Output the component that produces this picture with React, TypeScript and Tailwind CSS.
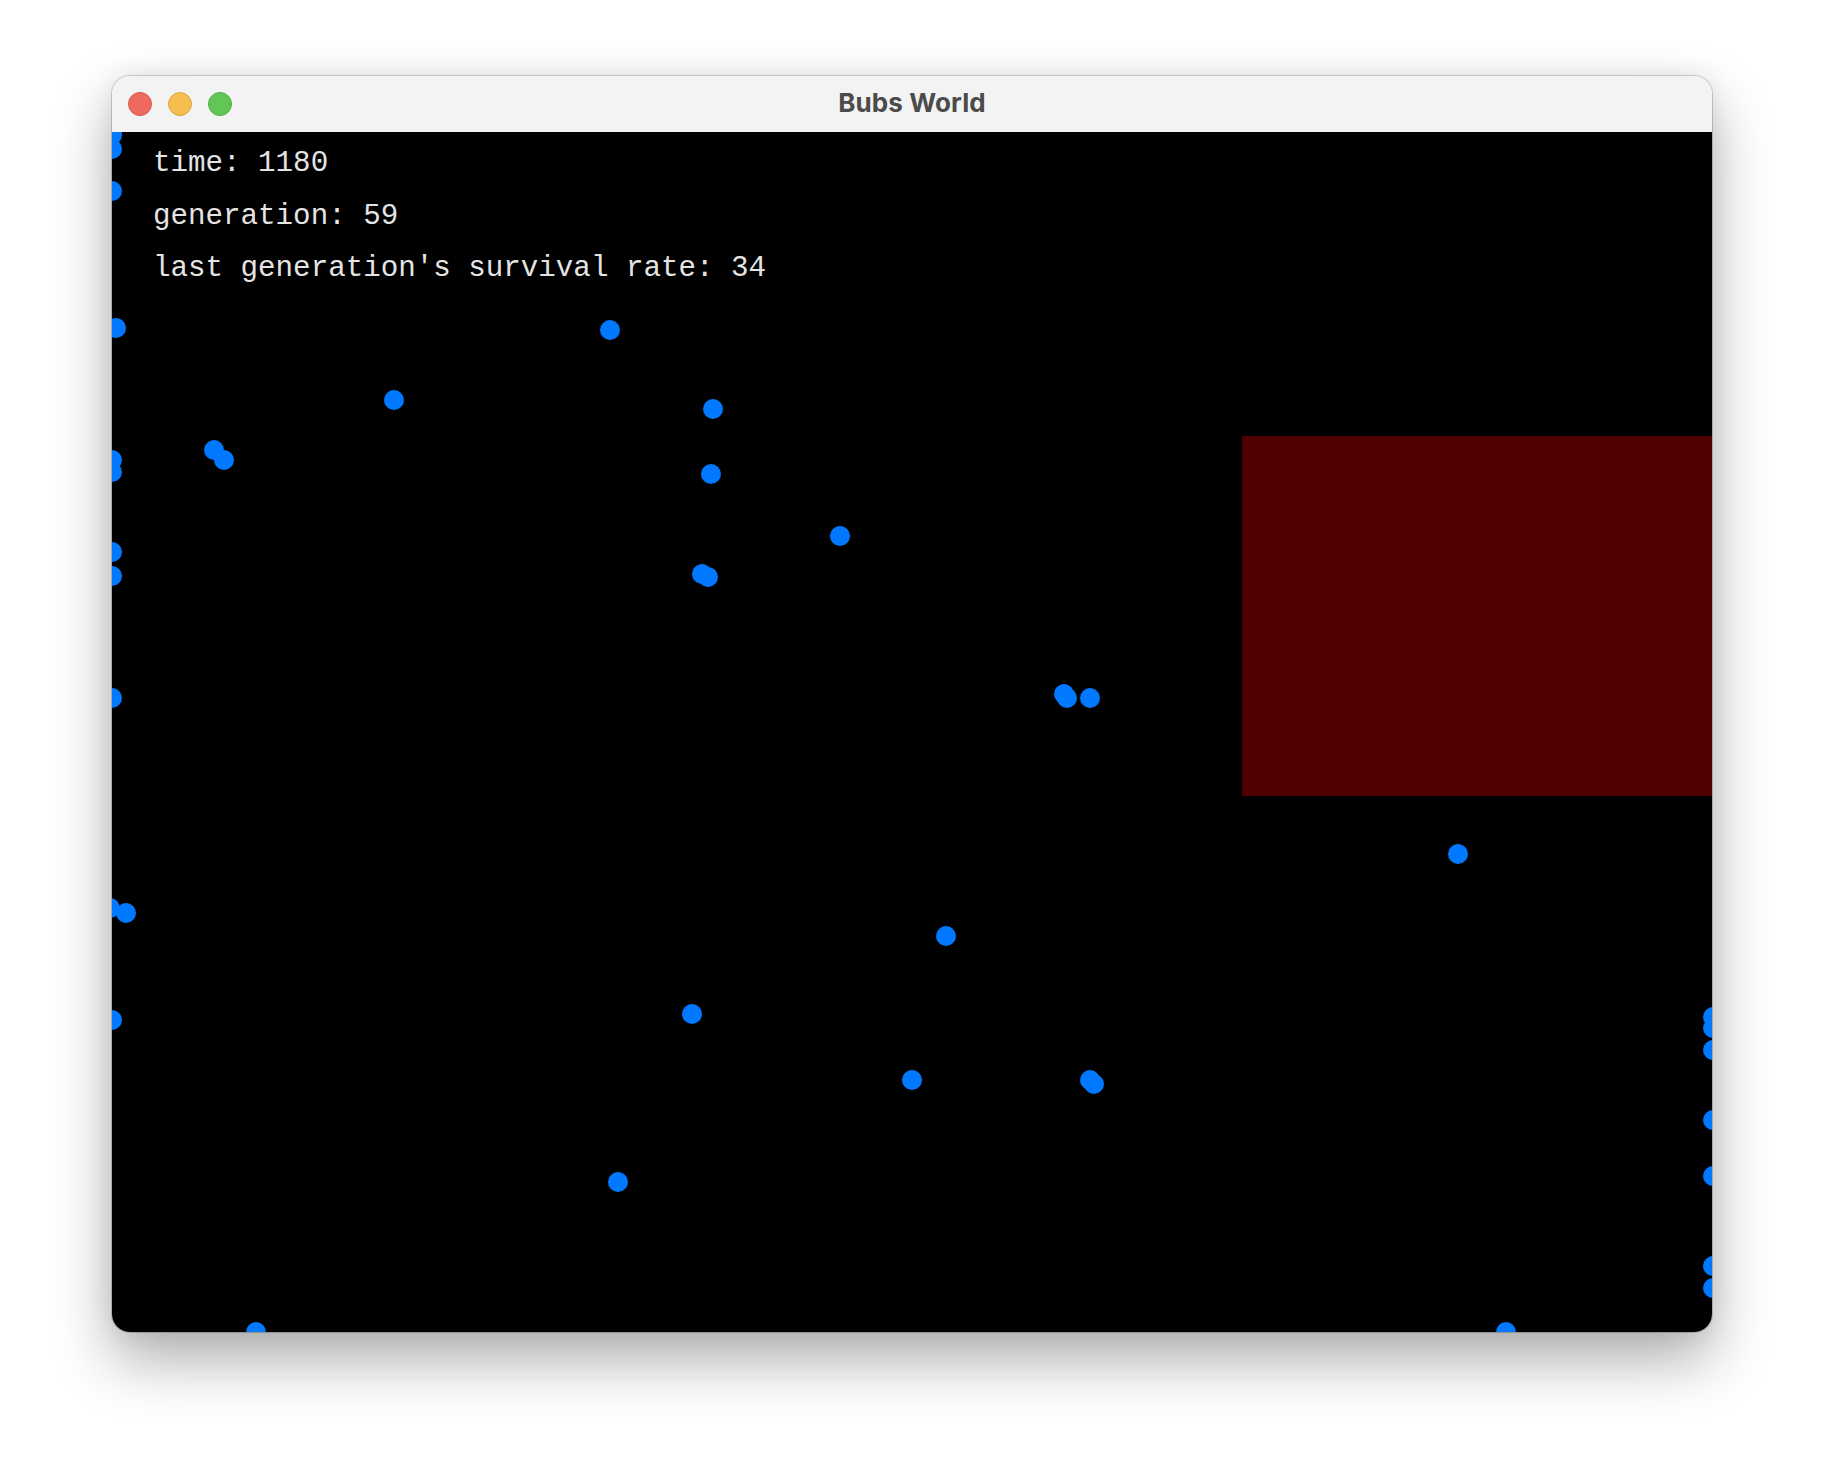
type Bub = { x: number; y: number };

// centres in canvas pixels (canvas is 1600 x 1200)
const bubs: Bub[] = [
  { x: 0, y: 3 },
  { x: 0, y: 17 },
  { x: 0, y: 59 },
  { x: 4, y: 196 },
  { x: 498, y: 198 },
  { x: 282, y: 268 },
  { x: 601, y: 277 },
  { x: 102, y: 318 },
  { x: 112, y: 328 },
  { x: 0, y: 328 },
  { x: 0, y: 340 },
  { x: 599, y: 342 },
  { x: 728, y: 404 },
  { x: 0, y: 420 },
  { x: 0, y: 444 },
  { x: 590, y: 442 },
  { x: 596, y: 445 },
  { x: 0, y: 566 },
  { x: 952, y: 562 },
  { x: 955, y: 566 },
  { x: 978, y: 566 },
  { x: 1346, y: 722 },
  { x: 834, y: 804 },
  { x: -2, y: 776 },
  { x: 14, y: 781 },
  { x: 0, y: 888 },
  { x: 580, y: 882 },
  { x: 800, y: 948 },
  { x: 978, y: 948 },
  { x: 982, y: 952 },
  { x: 506, y: 1050 },
  { x: 144, y: 1200 },
  { x: 1394, y: 1200 },
  { x: 1601, y: 885 },
  { x: 1601, y: 896 },
  { x: 1601, y: 918 },
  { x: 1601, y: 988 },
  { x: 1601, y: 1044 },
  { x: 1601, y: 1134 },
  { x: 1601, y: 1156 },
];

const stats = ["time: 1180", "generation: 59", "last generation's survival rate: 34"];

const TrafficLights = () => (
  <div className="flex items-center gap-[16px] pl-[16px]">
    <span className="w-[24px] h-[24px] rounded-full bg-[#ee6a5f] border border-[#d9574c]" />
    <span className="w-[24px] h-[24px] rounded-full bg-[#f5be4f] border border-[#dca43b]" />
    <span className="w-[24px] h-[24px] rounded-full bg-[#62c655] border border-[#4fae43]" />
  </div>
);

export default function App() {
  return (
    <div className="w-[1824px] h-[1480px] bg-white pt-[76px] pl-[112px]">
      <div className="w-[1600px] rounded-[18px] overflow-hidden shadow-[0_0_0_1px_rgba(0,0,0,0.18),0_28px_60px_rgba(0,0,0,0.32),0_0_24px_rgba(0,0,0,0.08)]">
        <div className="h-[56px] bg-[#f3f3f3] grid grid-cols-[1fr_auto_1fr] items-center">
          <TrafficLights />
          <h1 className="mb-[4px] text-[26px] font-bold text-[#4b4b4b] font-['Inter',sans-serif] tracking-[0.1px]">Bubs World</h1>
          <div />
        </div>

        <div className="relative h-[1200px] bg-black overflow-hidden">
          <div className="absolute left-[1130px] top-[304px] w-[470px] h-[360px] bg-[#500000]" />
          {bubs.map((b, i) => (
            <div
              key={i}
              className="absolute w-[20px] h-[20px] rounded-full bg-[#0078ff]"
              style={{ left: b.x - 10, top: b.y - 10 }}
            />
          ))}
          <div className="relative flex flex-col pt-[6px] pl-[41px] font-['Liberation_Mono',monospace] text-[29.2px] leading-[52.5px] text-[#e4e4e4] whitespace-pre">
            {stats.map((line) => (
              <p key={line}>{line}</p>
            ))}
          </div>
        </div>
      </div>
    </div>
  );
}
